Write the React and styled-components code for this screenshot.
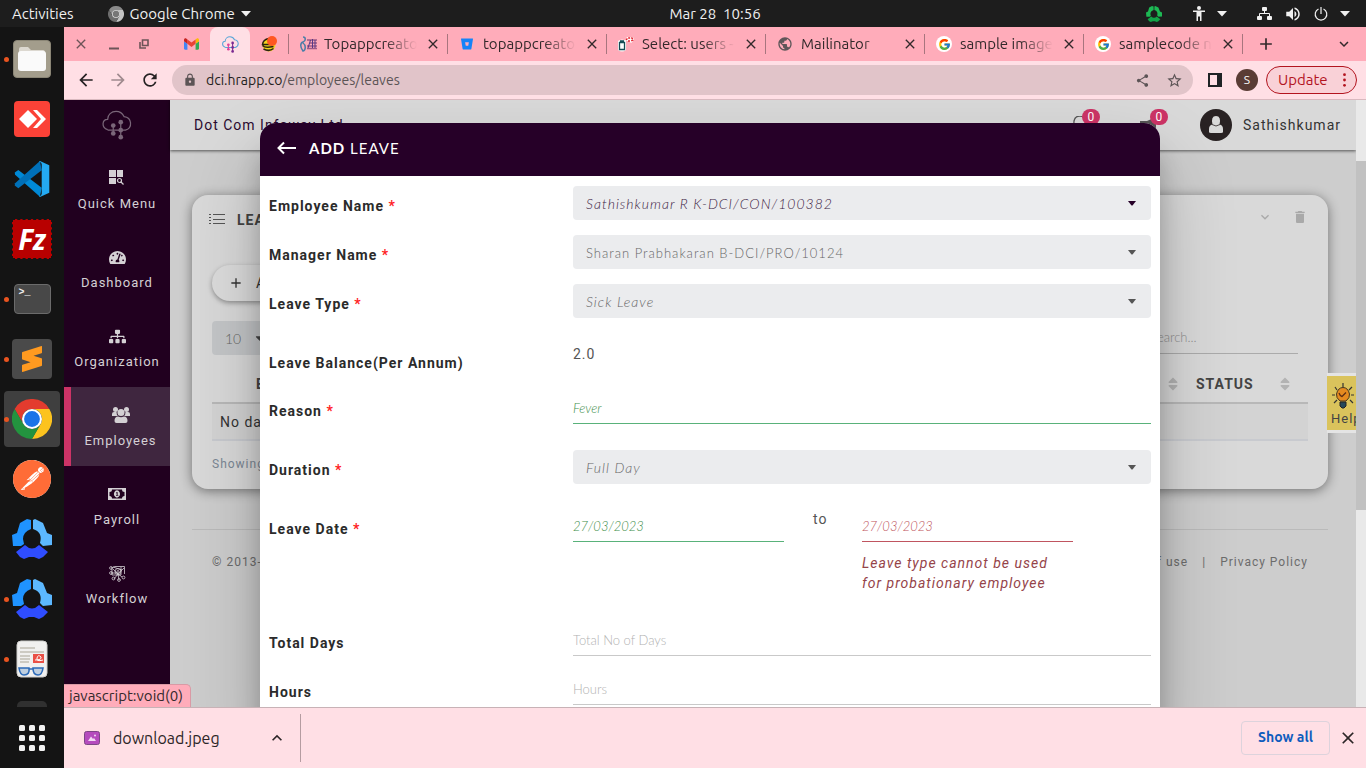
import React from "react";
import styled, { createGlobalStyle, css } from "styled-components";
import { MdArrowBack, MdArrowForward, MdRefresh, MdLock, MdShare, MdStarBorder, MdKeyboardArrowDown, MdKeyboardArrowUp, MdClose, MdAdd, MdDelete, MdVolumeUp, MdPublic } from "react-icons/md";
import { FaTachometerAlt, FaSitemap, FaCaretDown, FaSort } from "react-icons/fa";
import { SiPostman, SiSublimetext, SiBitbucket } from "react-icons/si";
import { FcGoogle } from "react-icons/fc";

const desktopFont = `Ubuntu, "Noto Sans", sans-serif`;
const appFont = `Roboto, "Liberation Sans", sans-serif`;
const fieldFont = `Lato, "Open Sans", sans-serif`;

const GlobalStyle = createGlobalStyle`
  *, *::before, *::after { box-sizing: border-box; }
  body { margin: 0; background: #141414; }
  button, input, select { font: inherit; color: inherit; }
  button { border: 0; padding: 0; background: none; }
  svg { display: block; flex: none; }
  ul { list-style: none; margin: 0; padding: 0; }
  a { color: inherit; text-decoration: none; }
`;

/* ---------- desktop ---------- */
const Desktop = styled.div`
  display: flex;
  flex-direction: column;
  height: 100vh;
  overflow: hidden;
  font: 15px/20px ${desktopFont};
`;
const TopBar = styled.header`
  flex: none;
  display: grid;
  grid-template-columns: 68px 1fr auto 1fr;
  align-items: center;
  height: 27px;
  padding: 0 16px 0 12px;
  background: #1d1d1d;
  color: #f0f0f0;
  > :first-child { grid-column: 1 / 3; }
`;
const TopGroup = styled.div`
  display: flex;
  align-items: center;
  gap: ${(p) => p.$gap}px;
  justify-content: ${(p) => (p.$end ? "flex-end" : "flex-start")};
`;
const TopButton = styled.button`
  display: flex;
  align-items: center;
  gap: 6px;
`;
const Clock = styled.time`
  white-space: pre;
`;
const Workspace = styled.div`
  flex: 1;
  min-height: 0;
  display: flex;
`;
const Dock = styled.nav`
  flex: none;
  display: flex;
  flex-direction: column;
  width: 64px;
  background: #141414;
`;
const DockList = styled.ul`
  flex: 1;
  min-height: 0;
  overflow: hidden;
  padding-top: 2px;
`;
const DockItem = styled.li`
  display: flex;
  align-items: center;
  height: 60px;
  padding-left: 4px;
`;
const DockButton = styled.button`
  position: relative;
  display: grid;
  place-items: center;
  width: 56px;
  height: 56px;
  border-radius: 4px;
  background: ${(p) => (p.$active ? "#3f3f3f" : "transparent")};
  ${(p) => p.$running && css`
    &::before {
      content: "";
      position: absolute;
      left: 0;
      width: 5px;
      height: 5px;
      border-radius: 50%;
      background: #e95420;
    }
  `}
`;
const DockTile = styled.span`
  display: grid;
  place-items: center;
  width: ${(p) => p.$w || 38}px;
  height: ${(p) => p.$h || 38}px;
  border-radius: ${(p) => p.$r || 4}px;
  background: ${(p) => p.$bg};
  border: ${(p) => p.$border || "0"};
`;
const TerminalTile = styled(DockTile)`
  place-items: start;
  padding: 0 0 0 4px;
  color: #eee;
  font: bold 10px/16px "Liberation Mono", monospace;
`;
const FileZillaTile = styled(DockTile)`
  color: #fff;
  font: italic bold 28px/34px "Open Sans", sans-serif;
`;
const AppsButton = styled.button`
  flex: none;
  display: grid;
  place-items: center;
  height: 61px;
`;

/* ---------- browser ---------- */
const Browser = styled.section`
  flex: 1;
  min-width: 0;
  display: flex;
  flex-direction: column;
`;
const TabStrip = styled.div`
  flex: none;
  display: flex;
  align-items: center;
  height: 34px;
  padding-right: 13px;
  background: #ffacba;
  color: #33292b;
`;
const WindowControls = styled.div`
  display: flex;
  align-items: center;
  gap: 20px;
  width: 108px;
  padding-left: 9px;
  color: #6d5458;
`;
const PinnedTab = styled.button`
  display: grid;
  place-items: center;
  width: ${(p) => (p.$active ? 40 : 38)}px;
  height: 34px;
  border-radius: 8px 8px 0 0;
  background: ${(p) => (p.$active ? "#ffdfe5" : "transparent")};
`;
const Tab = styled.div`
  display: flex;
  align-items: center;
  gap: 8px;
  width: 159px;
  height: 20px;
  padding: 0 6px 0 11px;
  border-left: 1px solid #a8757e;
`;
const TabTitle = styled.span`
  flex: 1;
  min-width: 0;
  overflow: hidden;
  white-space: nowrap;
  mask-image: linear-gradient(90deg, #000 65%, transparent);
`;
const TabEnd = styled.div`
  flex: 1;
  display: flex;
  justify-content: space-between;
  align-items: center;
  height: 20px;
  padding-left: 13px;
  border-left: 1px solid #a8757e;
`;
const Toolbar = styled.div`
  flex: none;
  display: flex;
  align-items: center;
  gap: 12px;
  height: 39px;
  padding: 0 9px 0 12px;
  background: #ffdfe5;
  border-bottom: 1px solid #d9b9bf;
  color: #262223;
`;
const NavButtons = styled.div`
  display: flex;
  gap: 12px;
`;
const AddressBar = styled.form`
  flex: 1;
  display: flex;
  align-items: center;
  height: 30px;
  padding: 0 10px 0 11px;
  border-radius: 15px;
  background: #e1c4c9;
  color: #5c5456;
`;
const Address = styled.p`
  flex: 1;
  margin: 0 0 0 9px;
  font-size: 14px;
  b { font-weight: 400; color: #241f20; }
`;
const AddressActions = styled.div`
  display: flex;
  gap: 16px;
`;
const ProfileButton = styled.button`
  width: 22px;
  height: 22px;
  border-radius: 50%;
  background: #5a3c35;
  color: #fff;
  font-size: 12px;
  line-height: 22px;
`;
const ToolbarEnd = styled.div`
  display: flex;
  align-items: center;
  gap: 14px;
  margin-left: 3px;
`;
const UpdateButton = styled.button`
  display: flex;
  align-items: center;
  justify-content: space-between;
  width: 91px;
  height: 28px;
  margin-left: -6px;
  padding: 0 10px 0 11px;
  border: 1px solid #b3141f;
  border-radius: 14px;
  background: #f9d1d7;
  color: #b3141f;
`;
const Viewport = styled.div`
  flex: 1;
  min-height: 0;
  display: flex;
`;
const ScrollTrack = styled.div`
  flex: none;
  width: 10px;
  padding-top: 61px;
  background: #e9e9e9;
`;
const ScrollThumb = styled.div`
  height: 64%;
  background: #c1c1c1;
`;
const StatusBubble = styled.output`
  position: absolute;
  left: 0;
  bottom: 0;
  height: 23px;
  padding: 0 7px 0 5px;
  border: 1px solid #d99aa5;
  border-width: 1px 1px 0 0;
  border-radius: 0 5px 0 0;
  background: #ffacba;
  color: #33292b;
  font: 15px/22px ${desktopFont};
  letter-spacing: 0;
`;
const DownloadBar = styled.footer`
  flex: none;
  display: flex;
  align-items: center;
  justify-content: space-between;
  height: 61px;
  padding-right: 8px;
  border-top: 1px solid #c8b2b6;
  background: #ffdfe5;
  color: #2c2627;
`;
const DownloadItem = styled.button`
  display: flex;
  align-items: center;
  gap: 13px;
  width: 237px;
  height: 48px;
  padding: 0 13px 0 20px;
  border-right: 1px solid #b59ca1;
  font-size: 16px;
  span { flex: 1; text-align: left; }
`;
const ShowAll = styled.button`
  width: 89px;
  height: 34px;
  padding-bottom: 2px;
  border: 1px solid #ddd3dc;
  border-radius: 4px;
  color: #0f5cbd;
  font-size: 14px;
  font-weight: 600;
`;

/* ---------- HR application ---------- */
const AppPage = styled.div`
  position: relative;
  flex: 1;
  min-width: 0;
  display: flex;
  overflow: hidden;
  background: #cdcdcd;
  color: #333;
  font: 14px/20px ${appFont};
  letter-spacing: 1px;
`;
const Sidebar = styled.nav`
  flex: none;
  width: 106px;
  background: #21001f;
  color: #d4d0d4;
`;
const Brand = styled.a`
  display: flex;
  justify-content: center;
  height: 50px;
  padding-top: 10px;
`;
const NavItem = styled.a`
  display: flex;
  flex-direction: column;
  align-items: center;
  gap: 7px;
  height: 79px;
  padding-top: 19px;
  font-size: 13px;
  ${(p) => p.$active && css`
    border-left: 7px solid #cc3366;
    background: #3f263f;
  `}
`;
const NavIcon = styled.span`
  display: grid;
  place-items: center;
  height: 18px;
`;
const Main = styled.main`
  flex: 1;
  min-width: 0;
`;
const PageHeader = styled.header`
  display: flex;
  align-items: center;
  height: 50px;
  padding: 0 15px 0 24px;
  background: #d9d9d9;
  box-shadow: 0 1px 3px rgba(0, 0, 0, 0.6);
  strong { flex: 1; font-weight: 400; color: #2b0a30; }
`;
const Notice = styled.button`
  position: relative;
  width: 22px;
  margin-right: 46px;
  color: #555;
`;
const Badge = styled.span`
  position: absolute;
  top: -7px;
  left: 10px;
  width: 18px;
  height: 16px;
  border-radius: 8px;
  background: #cc3366;
  color: #fff;
  font-size: 12px;
  line-height: 16px;
  letter-spacing: 0;
  text-align: center;
`;
const User = styled.button`
  display: flex;
  align-items: center;
  gap: 11px;
  margin-left: -8px;
  letter-spacing: 1px;
`;
const Card = styled.section`
  margin: 45px 28px 0 22px;
  padding-bottom: 15px;
  border-radius: 16px;
  background: #d9d9d9;
  box-shadow: 0 2px 12px rgba(0, 0, 0, 0.45);
`;
const CardHead = styled.header`
  display: flex;
  align-items: center;
  height: 50px;
  padding: 0 20px 0 17px;
  color: #a9a9a9;
  h2 { flex: 1; margin: 0; padding-left: 12px; font: bold 14px/20px ${appFont}; color: #444; }
`;
const CardTools = styled.div`
  display: flex;
  gap: 19px;
  padding-bottom: 6px;
`;
const CardBody = styled.div`
  padding: 20px 20px 0;
`;
const AddButton = styled.button`
  display: flex;
  align-items: center;
  gap: 12px;
  height: 36px;
  padding: 0 24px 0 16px;
  border-radius: 18px;
  background: #dcdcdc;
  box-shadow: 0 2px 5px rgba(0, 0, 0, 0.35);
  letter-spacing: 1px;
`;
const TableTools = styled.div`
  display: flex;
  justify-content: space-between;
  margin: 20px 0 10px;
  padding-right: 10px;
`;
const PageSize = styled.select`
  appearance: none;
  width: 70px;
  height: 34px;
  padding: 2px 13px 0;
  border: 0;
  border-radius: 4px;
  background: #c4c6c8;
  color: #666;
  font: 300 14px/20px ${fieldFont};
`;
const SelectWrap = styled.span`
  display: grid;
  align-items: center;
  > * { grid-area: 1 / 1; }
  > svg { justify-self: end; margin-right: 15px; pointer-events: none; }
`;
const Search = styled.input`
  width: 150px;
  height: 33px;
  padding: 0 2px;
  border: 0;
  border-bottom: 1px solid #ababab;
  background: none;
  font: 300 13px/20px ${fieldFont};
  &::placeholder { color: #8e8e8e; }
`;
const DataTable = styled.table`
  width: 100%;
  border-collapse: collapse;
  th {
    height: 38px;
    padding: 0 15px 0 0;
    border-bottom: 2px solid #b8b8b8;
    text-align: left;
    color: #444;
  }
  td {
    height: 37px;
    padding: 0 8px;
    border-bottom: 2px solid #c8cacf;
    background: #d3d3d3;
  }
  th:first-child { width: 44px; }
  th:last-child { width: 112px; }
`;
const SortHead = styled.span`
  display: flex;
  justify-content: space-between;
  align-items: center;
  svg { color: #b3b3b3; }
`;
const TableInfo = styled.p`
  margin: 13px 0 0;
  color: #7b8794;
  font-size: 12px;
`;
const PageFooter = styled.footer`
  display: flex;
  justify-content: space-between;
  margin: 40px 28px 0 22px;
  padding: 22px 20px;
  border-top: 1px solid #bababa;
  color: #6c6c6c;
  font-size: 12px;
`;
const FooterLinks = styled.div`
  display: flex;
  gap: 14px;
`;
const HelpTab = styled.button`
  position: absolute;
  top: 273px;
  right: 0;
  width: 29px;
  height: 60px;
  overflow: hidden;
  border: solid #e4e4e4;
  border-width: 3px 0;
  background: #dac35c;
  color: #444;
  font-size: 13px;
  line-height: 18px;
  letter-spacing: 1px;
  text-align: left;
  padding: 4px 0 0 4px;
`;

/* ---------- modal form ---------- */
const Overlay = styled.div`
  position: absolute;
  inset: 0;
  display: flex;
  justify-content: center;
  align-items: flex-start;
  padding-top: 23px;
`;
const Modal = styled.form`
  width: 900px;
  max-width: 100%;
  min-height: 100%;
  border-radius: 16px;
  overflow: hidden;
  background: #fff;
  box-shadow: 0 27px 24px 0 rgba(0, 0, 0, 0.2), 0 40px 77px 0 rgba(0, 0, 0, 0.22);
`;
const ModalHead = styled.header`
  display: flex;
  align-items: center;
  gap: 12px;
  height: 53px;
  padding: 0 17px 4px;
  background: #260028;
  color: #fff;
  h1 { margin: 0; font: 400 15px/20px ${fieldFont}; }
  b { font-weight: 700; }
`;
const Fields = styled.div`
  padding: 10px 9px;
`;
const Row = styled.div`
  display: grid;
  grid-template-columns: 304px 1fr;
  align-items: start;
  min-height: ${(p) => p.$h || 49}px;
  margin-top: ${(p) => p.$top || 0}px;
  > label {
    padding-top: ${(p) => (p.$select ? 10 : 9)}px;
    color: #2b2b2b;
    font-weight: 700;
  }
`;
const Required = styled.span`
  color: #ff1d25;
`;
const Select = styled.select`
  appearance: none;
  width: 100%;
  height: 34px;
  padding: 2px 13px 0;
  border: 0;
  border-radius: 4px;
  background: #ebecee;
  color: ${(p) => (p.$strong ? "#3d1d44" : "#666")};
  font: ${(p) => (p.$plain ? "normal 300 13px" : "italic 300 14px")}/20px ${fieldFont};
  letter-spacing: 1px;
`;
const toneText = { good: "#3f8f4c", bad: "#c0555c", idle: "#555" };
const toneLine = { good: "#59b27a", bad: "#c05560", idle: "#c9c9c9" };
const TextInput = styled.input`
  width: 100%;
  height: 32px;
  padding: 0;
  border: 0;
  border-bottom: 1px solid ${(p) => toneLine[p.$tone]};
  background: none;
  color: ${(p) => toneText[p.$tone]};
  font: italic 300 13px/20px ${fieldFont};
  &::placeholder { color: #b2b2b2; font-style: normal; opacity: 1; }
`;
const Output = styled.output`
  color: #555;
`;
const DateRange = styled.div`
  display: grid;
  grid-template-columns: 211px 78px 211px;
  align-items: start;
  color: #555;
  > span { padding-left: 29px; line-height: 18px; }
`;
const FieldError = styled.p`
  margin: 11px 0 0;
  padding-right: 20px;
  color: #954449;
  font-style: italic;
`;

/* ---------- drawings ---------- */
const ChromeLogo = ({ size, gray }) => {
  const c = gray ? ["#8a8a8a", "#c4c4c4", "#6e6e6e", "#dedede", "#777"] : ["#e33b2e", "#fcc31e", "#23933f", "#fff", "#1a73e8"];
  return (
    <svg width={size} height={size} viewBox="0 0 48 48">
      <path fill={c[0]} d="M24 12H44.8A24 24 0 0 0 3.2 12L13.6 30A12 12 0 0 1 24 12Z" />
      <path fill={c[1]} d="M24 12H44.8A24 24 0 0 1 24 48L34.4 30A12 12 0 0 0 24 12Z" />
      <path fill={c[2]} d="M13.6 30L3.2 12A24 24 0 0 0 24 48L34.4 30A12 12 0 0 1 13.6 30Z" />
      <circle cx="24" cy="24" r="12" fill={c[3]} />
      <circle cx="24" cy="24" r="9.5" fill={c[4]} />
    </svg>
  );
};
const RingLogo = ({ size, colors }) => (
  <svg width={size} height={size} viewBox="0 0 40 40">
    <path fill={colors[0]} d="M8 4 15 0 19 1 19 10Q11 13 11 20L12 25 9 27 1 27 0 16 5 14Z" />
    <path fill={colors[1]} d="M23 0 31 4 35 14 40 16 40 26 31 27 28 24Q31 13 21 10L21 1Z" />
    <path fill={colors[2]} d="M13 26Q20 33 27 26L36 33 31 38 27 40 22 38H17L12 40 8 38 4 33Z" />
  </svg>
);
const blueRing = ["#1f93ff", "#5cb8ff", "#2f4dff"];
const greenRing = ["#1db954", "#1db954", "#12a347"];

const CloudLogo = ({ size, cloud, left, right, weight }) => (
  <svg width={size} height={size} viewBox="0 0 32 32" fill="none" strokeWidth={weight}>
    <path stroke={cloud} d="M6 21C-1 19 0 10 6 10 6 5 10 1.500 15 1.500 19 1.500 22 4 23.500 7 32 8 33 19 25 21.500H6" />
    <path stroke={left} d="M12 16V25" />
    <path stroke={right} d="M20 13V28" />
    <g fill={left}><circle cx="12" cy="16.500" r="2.500" /><circle cx="12" cy="25" r="2.500" /></g>
    <g fill={right}><circle cx="20" cy="13" r="2.500" /><circle cx="20" cy="21.500" r="2.500" /><circle cx="20" cy="29" r="2.500" /></g>
  </svg>
);
const GmailLogo = () => (
  <svg width="15" height="12" viewBox="52 42 88 66">
    <path fill="#4285f4" d="M58 108h14V74L52 59v43c0 3.320 2.690 6 6 6" />
    <path fill="#34a853" d="M120 108h14c3.320 0 6-2.690 6-6V59l-20 15" />
    <path fill="#fbbc04" d="M120 48v26l20-15v-8c0-7.420-8.470-11.650-14.400-7.200" />
    <path fill="#ea4335" d="M72 74V48l24 18 24-18v26L96 92" />
    <path fill="#c5221f" d="M52 51v8l20 15V48l-5.600-4.200c-5.940-4.450-14.400-.22-14.400 7.200" />
  </svg>
);
const SmileLogo = () => (
  <svg width="16" height="16" viewBox="0 0 16 16">
    <circle cx="8" cy="9" r="6.500" fill="#f5d51c" />
    <path d="M8 2.500Q2 3.500 1.500 8.500H11M1.500 9.500Q4 12.500 12.500 10.500M2.500 13Q8 16 12.500 12.500" stroke="#2b2410" strokeWidth="1.500" fill="none" />
    <circle cx="11" cy="5" r="5" fill="#ff5722" />
  </svg>
);
const StripesLogo = () => (
  <svg width="17" height="16" viewBox="0 0 17 16" fill="none">
    <path d="M3 1C6 1 6 5 3 6S0 11 3 15C6 14 6 9 3 7" stroke="#4a7ea8" strokeWidth="1.500" />
    <path d="M7 4H17M10 7H17M7 10H17M7 12.500H17" stroke="#a05a86" strokeWidth="1.500" />
    <path d="M10.500 4 8 12M12.500 3V12M15 4V12" stroke="#553a88" />
  </svg>
);
const AdminerLogo = () => (
  <svg width="16" height="16" viewBox="0 0 16 16">
    <path d="M0 5Q4 2 8 5V14Q4 17 0 14Z" fill="#fff" />
    <path d="M1.500 6.500H6.500V13.500H1.500ZM2 5H6" fill="none" stroke="#164c55" strokeWidth="1.300" />
    <path d="M7 5 9 1H15L16 4 13 7 11 5Z" fill="#fff" />
    <path d="M8 4 10 2H14L15 4 13 5M11 4V6" fill="none" stroke="#e2202b" strokeDasharray="2 1" strokeWidth="1.400" />
  </svg>
);
const GoogleTile = styled.span`
  display: grid;
  place-items: center;
  width: 16px;
  height: 16px;
  border-radius: 50%;
  background: #fff;
`;
const FilesDrawing = () => (
  <svg width="28" height="26" viewBox="0 0 28 26">
    <path d="M1 3Q1 1 3 1H10L13 4H25Q27 4 27 7V12H1Z" fill="#dcd8d0" />
    <rect x="0" y="5" width="28" height="20" rx="3" fill="#fafafa" />
  </svg>
);
const AnyDeskDrawing = () => (
  <svg width="28" height="20" viewBox="0 0 28 20" fill="#fff">
    <path d="M10 1 19 10 10 19 1 10Z" />
    <path d="M15 1H19L28 10 19 19H15L23 10Z" />
  </svg>
);
const CodeDrawing = () => (
  <svg width="36" height="36" viewBox="0 0 100 100">
    <path d="M2 32 12 25 77 74 72 99 3 38Z" fill="#0089d6" />
    <path d="M2 68 12 76 77 26 72 0 3 62Z" fill="#0070b8" />
    <path d="M72 0 98 12V88L72 100 70 97Q76 98 77 91V9Q76 2 70 3Z" fill="#24aaf2" />
  </svg>
);
const DocumentDrawing = () => (
  <svg width="32" height="38" viewBox="0 0 32 38">
    <rect x="1" y="1" width="30" height="36" rx="4" fill="#f1f0ef" stroke="#d0cfcd" />
    <path d="M4 8H19M4 12H28M4 16H14M4 19H14M4 22H13" stroke="#aaa396" strokeWidth="1.200" />
    <rect x="17" y="14" width="11" height="9" fill="#ea4f45" />
    <path d="M19 20Q26 20 25 17 22 14 21 18T27 20" stroke="#fff" fill="none" />
    <path d="M3 28H13Q14 35 8 35 4 35 3 28ZM17 28H27Q26 35 22 35 17 35 17 28ZM13 29H17" fill="#bfcfe0" stroke="#2c6ab8" strokeWidth="1.600" />
  </svg>
);
const AppsDrawing = () => (
  <svg width="26" height="26" viewBox="0 0 26 26" fill="#f2f2f2">
    {[0, 10, 20].map((y) => [0, 10, 20].map((x) => <rect key={`${x}-${y}`} x={x} y={y} width="6" height="6" rx="1.500" />))}
  </svg>
);
const QuickMenuDrawing = () => (
  <svg width="16" height="16" viewBox="0 0 16 16">
    <path fill="currentColor" d="M0 0H7V7H0ZM8 0H14V7H8ZM0 8H7V14H0Z" />
    <circle cx="10.500" cy="10.500" r="2" fill="none" stroke="currentColor" strokeWidth="1.200" />
    <path d="M12 12 14.500 14.500" stroke="currentColor" strokeWidth="1.300" />
  </svg>
);
const GroupDrawing = () => (
  <svg width="18" height="16" viewBox="0 0 18 16" fill="currentColor">
    <circle cx="3.500" cy="2.500" r="2.500" /><circle cx="14.500" cy="2.500" r="2.500" />
    <path d="M0 9V7Q0 5 2 5H4.500Q4.500 8 6 9ZM18 9V7Q18 5 16 5H13.500Q13.500 8 12 9Z" />
    <circle cx="9" cy="5.500" r="3.500" />
    <path d="M2.500 14Q2.500 9.500 6 9.500 9 11 12 9.500 15.500 9.500 15.500 14 15.500 16 13.500 16H4.500Q2.500 16 2.500 14Z" />
  </svg>
);
const MoneyDrawing = () => (
  <svg width="18" height="12" viewBox="0 0 18 12" fill="currentColor">
    <path fillRule="evenodd" d="M0 0H18V12H0ZM4 1.500Q4 4 1.500 4V8Q4 8 4 10.500H14Q14 8 16.500 8V4Q14 4 14 1.500Z" />
    <path fillRule="evenodd" d="M9 2.300A3 3.700 0 1 1 8.900 2.300ZM8 4.500V5.200H8.700V7H8V7.700H10.300V7H9.600V4Z" />
  </svg>
);
const WorkflowDrawing = () => (
  <svg width="17" height="17" viewBox="0 0 17 17" fill="none" stroke="currentColor" strokeWidth=".8">
    <path d="M2 3 6 1.500H15.500V9M4 2 13 5M2 8H8L13 12M5 14 9 9 15 3M4 4 9 9 10 15M12 2V10H3V3" />
    <circle cx="9" cy="6.500" r="3" /><circle cx="9" cy="6.500" r="1" />
    <circle cx="2" cy="3" r="1.400" /><circle cx="2" cy="8" r="1.400" /><circle cx="4.500" cy="13.500" r="1.400" /><circle cx="10" cy="15" r="1.400" /><circle cx="14.500" cy="12.500" r="1.400" />
  </svg>
);
const ListDrawing = () => (
  <svg width="16" height="12" viewBox="0 0 16 12" stroke="#555">
    <path d="M0 .5H2M0 3.500H2M0 6.500H2M0 9.500H2M4 .5H16M4 5.500H16M4 9.500H16" />
  </svg>
);
const Caret = ({ color }) => <svg width="8" height="5" viewBox="0 0 8 5"><path fill={color} d="M0 0H8L4.500 4.500H3.500Z" /></svg>;
const WideCaret = () => <svg width="10" height="6" viewBox="0 0 10 6"><path fill="currentColor" d="M0 0H10L5 5.500Z" /></svg>;
const AvatarDrawing = () => (
  <svg width="32" height="32" viewBox="0 0 32 32">
    <circle cx="16" cy="16" r="16" fill="#292223" />
    <path fill="#d9d9d9" d="M9 23V20Q9 16 12.500 15.500 10.500 7 16 7T19.500 15.500Q23 16 23 20V23Q23 24 21 24H11Q9 24 9 23Z" />
    <path d="M12 15.500Q16 18.500 20 15.500" fill="none" stroke="#292223" strokeWidth=".8" />
  </svg>
);
const BellDrawing = () => (
  <svg width="18" height="18" viewBox="0 0 18 18" fill="none" stroke="currentColor" strokeWidth="1.300">
    <path d="M0 13Q2 12 2 5 3 0 8 0T14 5Q14 12 16 13ZM6 16H10" />
  </svg>
);
const HornDrawing = () => (
  <svg width="18" height="18" viewBox="0 0 18 18" fill="currentColor">
    <path d="M0 5H7L16 1V15L7 10H0ZM2 11H6V16H3Z" />
  </svg>
);
const BulbDrawing = () => (
  <svg width="26" height="27" viewBox="0 0 26 27" fill="none">
    <path d="M12 0V4M4 4 6 7M21 4 18 7M1 12H4M23 12H20M3 20 6 17M22 20 19 17" stroke="#333" strokeWidth="1.200" />
    <path d="M9 18Q5 15 5.500 11 7 4.500 12 4.500T18.500 11Q19 15 15 18Z" fill="#e58a1f" stroke="#47371e" />
    <path d="M8 10Q9 13 11 13.500L15 9.500" stroke="#5d2d14" strokeWidth="1.300" />
    <path d="M9 19H15V23L13 25H11L9 23Z" fill="#24485a" stroke="#222" />
  </svg>
);
const PersonDrawing = () => (
  <svg width="12" height="15" viewBox="0 0 12 15" fill="currentColor">
    <circle cx="6" cy="2" r="2" /><path d="M0 4.500H12V6H8.500V15H7V10.500H5V15H3.500V6H0Z" />
  </svg>
);
const NetworkDrawing = () => (
  <svg width="15" height="14" viewBox="0 0 15 14" fill="currentColor">
    <rect x="5" width="5" height="4" rx="1" /><rect y="9" width="5" height="4" rx="1" /><rect x="10" y="9" width="5" height="4" rx="1" />
    <path d="M7.500 4V6.500M2.500 9V6.500H12.500V9" fill="none" stroke="currentColor" />
  </svg>
);
const PowerDrawing = () => (
  <svg width="14" height="14" viewBox="0 0 14 14" fill="none" stroke="currentColor" strokeWidth="1.200">
    <path d="M4.500 2A5.800 5.800 0 1 0 9.500 2M7 0V7" />
  </svg>
);
const SidePanelDrawing = () => (
  <svg width="14" height="14" viewBox="0 0 14 14"><path fill="#202326" fillRule="evenodd" d="M0 0H14V14H0ZM2 2V12H9V2Z" /></svg>
);
const MoreDrawing = () => (
  <svg width="3" height="14" viewBox="0 0 3 14" fill="currentColor"><circle cx="1.500" cy="1.700" r="1.400" /><circle cx="1.500" cy="7" r="1.400" /><circle cx="1.500" cy="12.300" r="1.400" /></svg>
);
const PictureDrawing = () => (
  <svg width="16" height="14" viewBox="0 0 16 14">
    <rect x=".5" y=".5" width="15" height="13" rx="2" fill="#b54bbd" stroke="#7c4785" />
    <path d="M4 10 7 5.500 9 8 10 7 12 10Z" fill="#f1d9f2" /><circle cx="11" cy="4.500" r="1" fill="#f1d9f2" />
  </svg>
);
const MinimizeDrawing = () => <svg width="10" height="12" viewBox="0 0 10 12"><path d="M0 10.500H10" stroke="currentColor" strokeWidth="2" /></svg>;
const RestoreDrawing = () => (
  <svg width="10" height="10" viewBox="0 0 10 10" fill="none" stroke="currentColor" strokeWidth="1.600"><path d="M3.500 1H9V6.500H3.500ZM1 3V9H7" /></svg>
);
const LongArrow = () => (
  <svg width="20" height="14" viewBox="0 0 20 14" fill="none" stroke="currentColor" strokeWidth="2"><path d="M19 7H2M7 1.500 1.500 7 7 12.500" /></svg>
);

/* ---------- content ---------- */
const dockApps = [
  { name: "Files", running: true, icon: <DockTile $bg="#a39d8c" $border="1px solid #8b8676"><FilesDrawing /></DockTile> },
  { name: "AnyDesk", icon: <DockTile $w={36} $h={36} $bg="#fb4237"><AnyDeskDrawing /></DockTile> },
  { name: "Visual Studio Code", icon: <CodeDrawing /> },
  { name: "FileZilla", icon: <FileZillaTile $w={40} $h={40} $r={1} $bg="#b80000" $border="1px dashed #141414">Fz</FileZillaTile> },
  { name: "Terminal", running: true, icon: <TerminalTile $w={37} $h={30} $bg="#484848" $border="1px solid #6b6b6b">&gt;_</TerminalTile> },
  { name: "Sublime Text", running: true, icon: <DockTile $w={40} $h={40} $bg="#4a4a4a"><SiSublimetext size={26} color="#ff9a20" /></DockTile> },
  { name: "Google Chrome", running: true, active: true, icon: <ChromeLogo size={40} /> },
  { name: "Postman", icon: <DockTile $r={19} $bg="#fff"><SiPostman size={38} color="#ff6c37" /></DockTile> },
  { name: "Time tracker", icon: <RingLogo size={40} colors={blueRing} /> },
  { name: "Time tracker window", running: true, icon: <RingLogo size={40} colors={blueRing} /> },
  { name: "Document viewer", running: true, icon: <DocumentDrawing /> },
  { name: "Trash", icon: <DockTile $w={30} $h={36} $r={5} $bg="#303030" /> },
];
const tabs = [
  { title: "Topappcreator", icon: <StripesLogo /> },
  { title: "topappcreator", icon: <SiBitbucket size={12} color="#1683f8" /> },
  { title: "Select: users - db", icon: <AdminerLogo /> },
  { title: "Mailinator", icon: <MdPublic size={16} color="#5f5659" /> },
  { title: "sample images", icon: <GoogleTile><FcGoogle size={13} /></GoogleTile> },
  { title: "samplecode no", icon: <GoogleTile><FcGoogle size={13} /></GoogleTile> },
];
const TabIcon = styled.span`
  display: grid;
  place-items: center;
  width: 16px;
`;
const menu = [
  { name: "Quick Menu", icon: <QuickMenuDrawing /> },
  { name: "Dashboard", icon: <FaTachometerAlt size={17} /> },
  { name: "Organization", icon: <FaSitemap size={17} /> },
  { name: "Employees", icon: <GroupDrawing />, active: true },
  { name: "Payroll", icon: <MoneyDrawing /> },
  { name: "Workflow", icon: <WorkflowDrawing /> },
];

const FieldLabel = ({ id, required, children }) => (
  <label htmlFor={id}>{children}{required && <Required> *</Required>}</label>
);
const SelectRow = ({ id, label, value, h, strong, plain }) => (
  <Row $h={h} $select>
    <FieldLabel id={id} required>{label}</FieldLabel>
    <SelectWrap>
      <Select id={id} defaultValue={value} $strong={strong} $plain={plain}><option>{value}</option></Select>
      <Caret color={strong ? "#260028" : "#555"} />
    </SelectWrap>
  </Row>
);
const InputRow = ({ id, label, h, required, tone = "idle", ...rest }) => (
  <Row $h={h}>
    <FieldLabel id={id} required={required}>{label}</FieldLabel>
    <TextInput id={id} type="text" $tone={tone} {...rest} />
  </Row>
);

function LeaveForm() {
  return (
    <Overlay>
      <Modal aria-label="Add leave">
        <ModalHead>
          <button type="button" aria-label="Back"><LongArrow /></button>
          <h1><b>ADD</b> LEAVE</h1>
        </ModalHead>
        <Fields>
          <SelectRow id="employee" label="Employee Name" value="Sathishkumar R K-DCI/CON/100382" strong />
          <SelectRow id="manager" label="Manager Name" value="Sharan Prabhakaran B-DCI/PRO/10124" plain />
          <SelectRow id="type" label="Leave Type" value="Sick Leave" />
          <Row $h={48} $top={11}>
            <FieldLabel id="balance">Leave Balance(Per Annum)</FieldLabel>
            <Output id="balance">2.0</Output>
          </Row>
          <InputRow id="reason" label="Reason" h={58} required tone="good" defaultValue="Fever" />
          <SelectRow id="duration" label="Duration" value="Full Day" h={60} />
          <Row $h={114}>
            <FieldLabel id="from" required>Leave Date</FieldLabel>
            <DateRange>
              <TextInput id="from" type="text" $tone="good" defaultValue="27/03/2023" />
              <span>to</span>
              <div>
                <TextInput aria-label="Leave end date" type="text" $tone="bad" defaultValue="27/03/2023" />
                <FieldError>Leave type cannot be used for probationary employee</FieldError>
              </div>
            </DateRange>
          </Row>
          <InputRow id="days" label="Total Days" placeholder="Total No of Days" />
          <InputRow id="hours" label="Hours" placeholder="Hours" />
        </Fields>
      </Modal>
    </Overlay>
  );
}

function LeavesPage() {
  return (
    <AppPage>
      <Sidebar>
        <Brand href="#" aria-label="Home"><CloudLogo size={30} cloud="#7a6679" left="#7a6679" right="#7a6679" weight={1.3} /></Brand>
        {menu.map((m) => (
          <NavItem key={m.name} href="#" $active={m.active}><NavIcon>{m.icon}</NavIcon>{m.name}</NavItem>
        ))}
      </Sidebar>
      <Main>
        <PageHeader>
          <strong>Dot Com Infoway Ltd</strong>
          <Notice aria-label="Notifications"><BellDrawing /><Badge>0</Badge></Notice>
          <Notice aria-label="Announcements"><HornDrawing /><Badge>0</Badge></Notice>
          <User><AvatarDrawing />Sathishkumar</User>
        </PageHeader>
        <Card>
          <CardHead>
            <ListDrawing />
            <h2>LEAVES</h2>
            <CardTools>
              <button aria-label="Collapse"><MdKeyboardArrowDown size={16} /></button>
              <button aria-label="Delete"><MdDelete size={16} /></button>
            </CardTools>
          </CardHead>
          <CardBody>
            <AddButton><MdAdd size={16} />Add</AddButton>
            <TableTools>
              <SelectWrap>
                <PageSize aria-label="Rows per page" defaultValue="10"><option>10</option></PageSize>
                <FaCaretDown size={14} color="#444" />
              </SelectWrap>
              <Search type="search" aria-label="Search" placeholder="Search..." />
            </TableTools>
            <DataTable>
              <thead>
                <tr>
                  <th />
                  <th><SortHead>EMPLOYEE<FaSort size={16} /></SortHead></th>
                  <th><SortHead>STATUS<FaSort size={16} /></SortHead></th>
                </tr>
              </thead>
              <tbody><tr><td colSpan={3}>No data available</td></tr></tbody>
            </DataTable>
            <TableInfo>Showing 0 to 0 of 0</TableInfo>
          </CardBody>
        </Card>
        <PageFooter>
          <span>© 2013-2023</span>
          <FooterLinks><a href="#">Terms of use</a><span>|</span><a href="#">Privacy Policy</a></FooterLinks>
        </PageFooter>
      </Main>
      <HelpTab><BulbDrawing />Help</HelpTab>
      <LeaveForm />
      <StatusBubble>javascript:void(0)</StatusBubble>
    </AppPage>
  );
}

export default function App() {
  return (
    <Desktop>
      <GlobalStyle />
      <TopBar>
        <TopGroup $gap={34}>
          <TopButton>Activities</TopButton>
          <TopButton><ChromeLogo size={16} gray />Google Chrome<WideCaret /></TopButton>
        </TopGroup>
        <Clock>Mar 28  10:56</Clock>
        <TopGroup $gap={18} $end>
          <TopGroup $gap={31}>
            <RingLogo size={16} colors={greenRing} />
            <TopGroup $gap={12}><PersonDrawing /><WideCaret /></TopGroup>
          </TopGroup>
          <TopGroup $gap={12}><span /><NetworkDrawing /><MdVolumeUp size={18} /><PowerDrawing /><WideCaret /></TopGroup>
        </TopGroup>
      </TopBar>
      <Workspace>
        <Dock aria-label="Applications">
          <DockList>
            {dockApps.map((a) => (
              <DockItem key={a.name}>
                <DockButton aria-label={a.name} $running={a.running} $active={a.active}>{a.icon}</DockButton>
              </DockItem>
            ))}
          </DockList>
          <AppsButton aria-label="Show applications"><AppsDrawing /></AppsButton>
        </Dock>
        <Browser>
          <TabStrip>
            <WindowControls>
              <button aria-label="Close window"><MdClose size={16} /></button>
              <button aria-label="Minimize"><MinimizeDrawing /></button>
              <button aria-label="Restore"><RestoreDrawing /></button>
            </WindowControls>
            <PinnedTab aria-label="Gmail"><GmailLogo /></PinnedTab>
            <PinnedTab aria-label="HR app" $active><CloudLogo size={17} cloud="#58a6d8" left="#e0409a" right="#7b2a90" weight={2} /></PinnedTab>
            <PinnedTab aria-label="Smile"><SmileLogo /></PinnedTab>
            {tabs.map((t, i) => (
              <Tab key={i}>
                <TabIcon>{t.icon}</TabIcon>
                <TabTitle>{t.title}</TabTitle>
                <button aria-label="Close tab"><MdClose size={16} /></button>
              </Tab>
            ))}
            <TabEnd>
              <button aria-label="New tab"><MdAdd size={20} /></button>
              <button aria-label="Search tabs"><MdKeyboardArrowDown size={18} /></button>
            </TabEnd>
          </TabStrip>
          <Toolbar>
            <NavButtons>
              <button aria-label="Back"><MdArrowBack size={20} /></button>
              <button aria-label="Forward"><MdArrowForward size={20} color="#a08a8e" /></button>
              <button aria-label="Reload"><MdRefresh size={20} /></button>
            </NavButtons>
            <AddressBar>
              <MdLock size={14} />
              <Address><b>dci.hrapp.co</b>/employees/leaves</Address>
              <AddressActions>
                <button type="button" aria-label="Share"><MdShare size={15} /></button>
                <button type="button" aria-label="Bookmark"><MdStarBorder size={17} /></button>
              </AddressActions>
            </AddressBar>
            <ToolbarEnd>
              <button aria-label="Side panel"><SidePanelDrawing /></button>
              <ProfileButton>S</ProfileButton>
              <UpdateButton>Update<MoreDrawing /></UpdateButton>
            </ToolbarEnd>
          </Toolbar>
          <Viewport>
            <LeavesPage />
            <ScrollTrack><ScrollThumb /></ScrollTrack>
          </Viewport>
          <DownloadBar>
            <DownloadItem><PictureDrawing /><span>download.jpeg</span><MdKeyboardArrowUp size={20} /></DownloadItem>
            <TopGroup $gap={8}>
              <ShowAll>Show all</ShowAll>
              <button aria-label="Close downloads"><MdClose size={20} /></button>
            </TopGroup>
          </DownloadBar>
        </Browser>
      </Workspace>
    </Desktop>
  );
}
